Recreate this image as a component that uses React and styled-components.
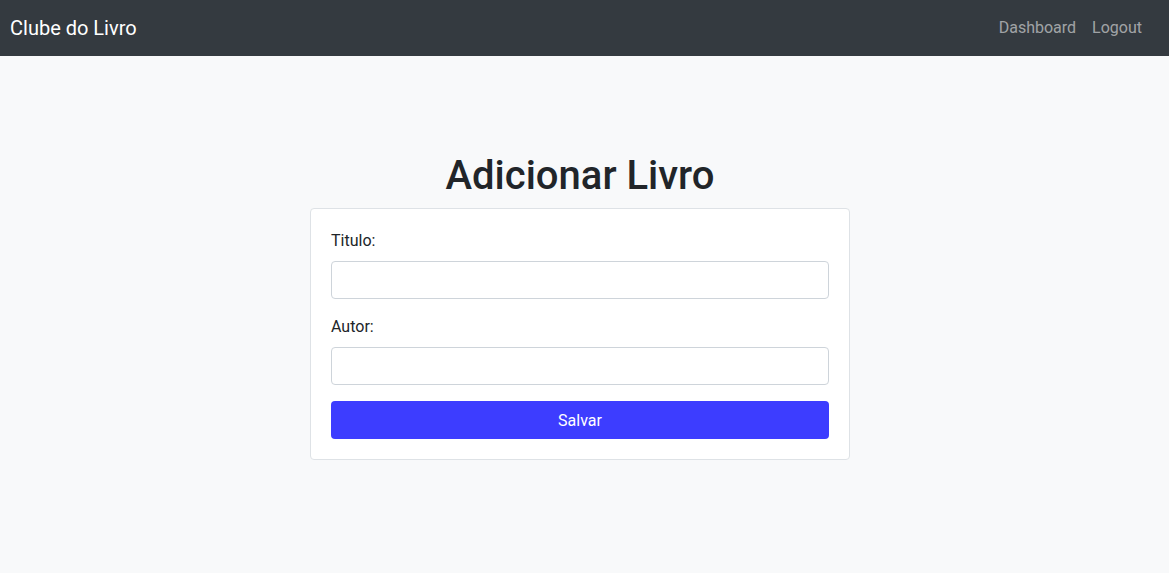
import styled, { createGlobalStyle } from "styled-components"

const GlobalStyle = createGlobalStyle`
    body {
        margin : 0;
        background : #f8f9fa;
        font-family : Roboto, "Liberation Sans", sans-serif;
        color : #212529;
    }
    * { box-sizing : border-box; }
`

const App = () => {
    return (
        <>
            <GlobalStyle />
            <Navbar>
                <Brand>Clube do Livro</Brand>
                <NavLinks>
                    <NavLink>Dashboard</NavLink>
                    <NavLink>Logout</NavLink>
                </NavLinks>
            </Navbar>
            <Main>
                <Heading>Adicionar Livro</Heading>
                <Card>
                    <Field>
                        <Label>Titulo:</Label>
                        <Input type="text" />
                    </Field>
                    <Field>
                        <Label>Autor:</Label>
                        <Input type="text" />
                    </Field>
                    <Button>Salvar</Button>
                </Card>
            </Main>
        </>
    )
}

export default App

const Navbar = styled.nav`
    height : 56px;
    background : #343a40;
    display : flex;
    align-items : center;
    justify-content : space-between;
    padding : 0 19px 0 10px;
`
const Brand = styled.span`
    color : #fff;
    font-size : 20px;
    line-height : 30px;
    margin-bottom : 1px;
`
const NavLinks = styled.div`
    display : flex;
    margin-bottom : 1px;
`
const NavLink = styled.a`
    color : rgba(255,255,255,.55);
    font-size : 16px;
    padding : 8px;
    cursor : pointer;
`
const Main = styled.main`
    display : flex;
    flex-direction : column;
    align-items : center;
    padding : 96px 9px 0 0;
`
const Heading = styled.h1`
    margin : 0 0 8px;
    font-size : 40px;
    font-weight : 500;
    line-height : 1.2;
`
const Card = styled.div`
    width : 540px;
    background : #fff;
    border : 1px solid #dee2e6;
    border-radius : 4px;
    padding : 20px;
    display : flex;
    flex-direction : column;
`
const Field = styled.div`
    margin-bottom : 16px;
    display : flex;
    flex-direction : column;
`
const Label = styled.label`
    font-size : 16px;
    line-height : 24px;
    margin-bottom : 8px;
`
const Input = styled.input`
    height : 38px;
    border : 1px solid #ced4da;
    border-radius : 4px;
    padding : 6px 12px;
    font-size : 16px;
`
const Button = styled.button`
    height : 38px;
    border : none;
    border-radius : 4px;
    background : #3d3dff;
    color : #fff;
    font-family : inherit;
    font-size : 16px;
`
